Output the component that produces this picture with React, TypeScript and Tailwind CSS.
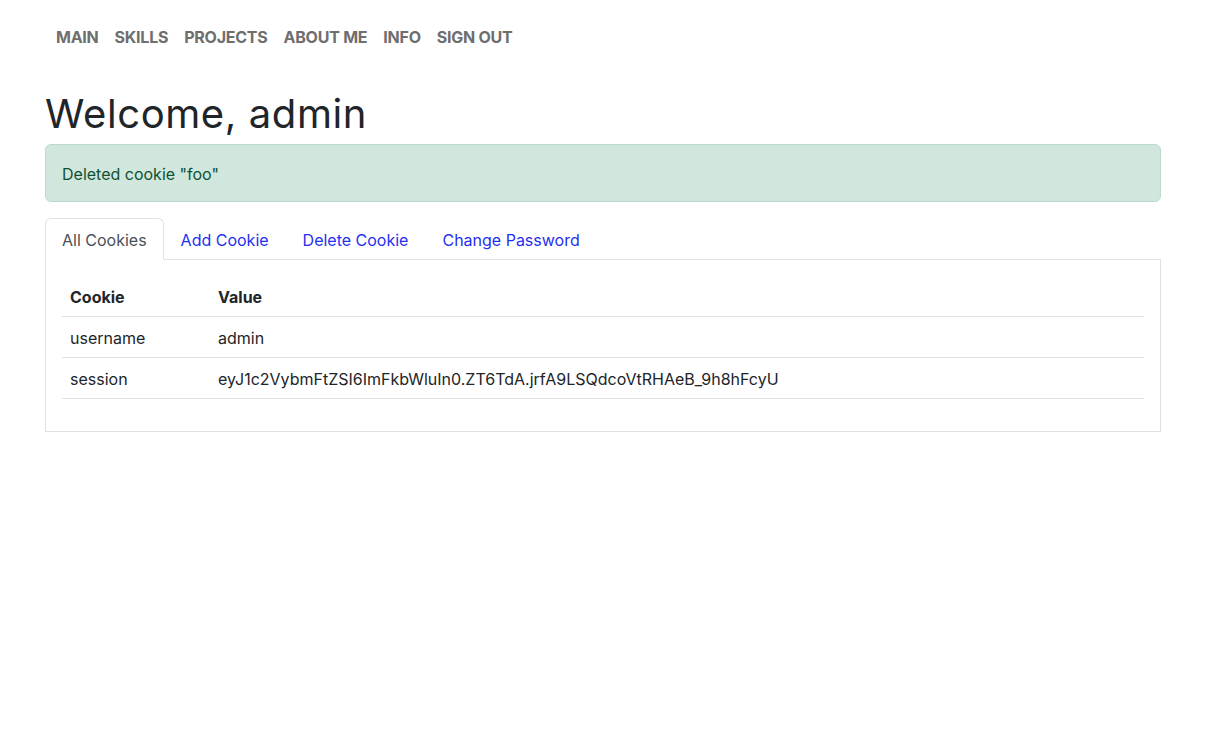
import React from "react";

const navItems = ["Main", "Skills", "Projects", "About me", "Info", "Sign out"];

const tabs = ["All Cookies", "Add Cookie", "Delete Cookie", "Change Password"];

const cookies = [
  { name: "username", value: "admin" },
  { name: "session", value: "eyJ1c2VybmFtZSI6ImFkbWluIn0.ZT6TdA.jrfA9LSQdcoVtRHAeB_9h8hFcyU" },
];

export default function App() {
  return (
    <div className="min-h-screen bg-white text-[#212529] font-['Inter','Liberation_Sans',sans-serif] text-[16px] leading-6">
      {/* верхняя навигация */}
      <nav className="pl-[48px] pt-[25px] pb-[15px]">
        <ul className="flex">
          {navItems.map((item) => (
            <li key={item}>
              <a className="block px-2 py-0 text-[16px] leading-6 font-bold uppercase tracking-[-0.015em] text-[#6e6e6e]">
                {item}
              </a>
            </li>
          ))}
        </ul>
      </nav>

      <div className="mx-auto w-[1140px] px-3">
        <h1 className="mt-[26px] mb-[6px] text-[40px] leading-[48px] font-normal tracking-[0.015em] text-[#212529]">
          Welcome, admin
        </h1>

        <div className="mb-4 rounded-md border border-[#badbcc] bg-[#d1e7dd] px-4 pt-[17px] pb-[15px] text-[#0f5132]">
          Deleted cookie "foo"
        </div>

        {/* вкладки */}
        <ul className="flex border-b border-[#dee2e6]">
          {tabs.map((tab, i) => (
            <li key={tab} className="-mb-px">
              <a
                className={
                  i === 0
                    ? "block rounded-t-md border border-[#dee2e6] border-b-white bg-white px-4 pt-[9px] pb-[7px] text-[#495057]"
                    : "block border border-transparent px-4 pt-[9px] pb-[7px] text-[#1f30f0]"
                }
              >
                {tab}
              </a>
            </li>
          ))}
        </ul>

        <div className="border border-t-0 border-[#dee2e6] p-4">
          <table className="mb-4 w-full border-collapse text-left">
            <thead>
              <tr className="border-b border-[#dee2e6]">
                <th className="w-[148px] px-2 pt-[9px] pb-[7px] font-bold">Cookie</th>
                <th className="px-2 pt-[9px] pb-[7px] font-bold">Value</th>
              </tr>
            </thead>
            <tbody>
              {cookies.map((c) => (
                <tr key={c.name} className="border-b border-[#dee2e6]">
                  <td className="px-2 pt-[9px] pb-[7px]">{c.name}</td>
                  <td className="px-2 pt-[9px] pb-[7px]">{c.value}</td>
                </tr>
              ))}
            </tbody>
          </table>
        </div>
      </div>
    </div>
  );
}
